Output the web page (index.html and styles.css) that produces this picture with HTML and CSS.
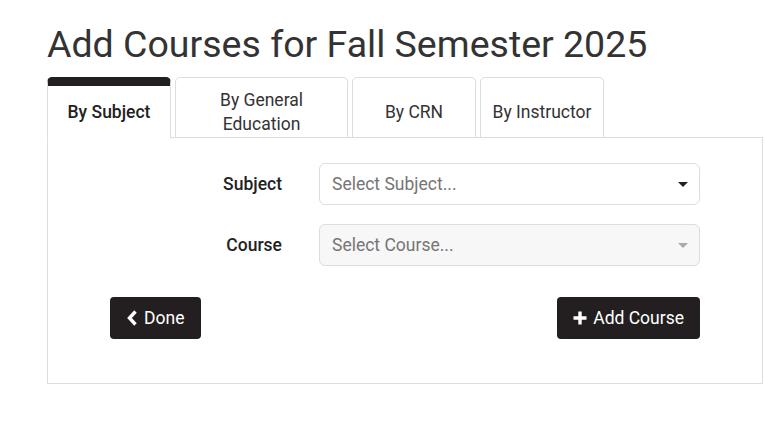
FILE: index.html
```html
<!DOCTYPE html>
<html>
<head>
<meta charset="utf-8">
<link rel="stylesheet" href="styles.css">
</head>
<body>
<div class="page">
  <h1 class="title">Add Courses for Fall Semester 2025</h1>
  <div class="tabs">
    <div class="tab active w124"><span>By Subject</span></div>
    <div class="tab w173"><span>By General<br>Education</span></div>
    <div class="tab w124"><span>By CRN</span></div>
    <div class="tab w124"><span>By Instructor</span></div>
  </div>
  <div class="panel">
    <div class="form">
      <label class="label">Subject</label>
      <div class="select">
        <span class="placeholder">Select Subject...</span>
        <span class="caret"></span>
      </div>
      <label class="label">Course</label>
      <div class="select disabled">
        <span class="placeholder">Select Course...</span>
        <span class="caret"></span>
      </div>
    </div>
    <div class="actions">
      <button class="btn btn-done">
        <svg class="ico" width="11" height="16" viewBox="0 0 11 16"><path d="M8.5 1.5 L2.5 8 L8.5 14.5" fill="none" stroke="#fff" stroke-width="3.4" stroke-linejoin="miter"/></svg>
        <span>Done</span>
      </button>
      <button class="btn">
        <svg class="ico" width="14" height="14" viewBox="0 0 14 14"><path d="M5.3 0.5h3.4v4.8h4.8v3.4H8.7v4.8H5.3V8.7H0.5V5.3h4.8z" fill="#fff"/></svg>
        <span>Add Course</span>
      </button>
    </div>
  </div>
</div>
</body>
</html>
```
FILE: styles.css
```css
html, body {
  margin: 0;
  padding: 0;
  background: #fff;
}
body {
  font-family: Roboto, "Liberation Sans", Arial, sans-serif;
  color: #333;
}
.page {
  padding-left: 47px;
  width: 716px;
}
.title {
  margin: 0;
  padding: 20px 0 9px 0;
  font-size: 37.5px;
  font-weight: 400;
  line-height: 48px;
  color: #333;
}
.tabs {
  display: flex;
  gap: 4px;
  height: 61px;
  position: relative;
  z-index: 1;
}
.tab {
  box-sizing: border-box;
  height: 61px;
  border: 1px solid #ddd;
  border-radius: 5px 5px 0 0;
  display: flex;
  align-items: center;
  justify-content: center;
  text-align: center;
  font-size: 17.5px;
  line-height: 24px;
  color: #333;
  background: #fff;
  padding-top: 9px;
}
.tab.active {
  border-top: 9px solid #231f20;
  border-bottom: 1px solid #fff;
  font-weight: 500;
  color: #222;
  padding-top: 0;
  height: 62px;
}
.w124 { width: 124px; }
.w173 { width: 173px; }
.panel {
  box-sizing: border-box;
  border: 1px solid #ddd;
  margin-top: -1px;
  width: 716px;
  height: 247px;
  padding: 25px 0 0 62px;
}
.form {
  display: grid;
  grid-template-columns: 172px 381px;
  column-gap: 37px;
  row-gap: 19px;
  align-items: center;
}
.label {
  text-align: right;
  font-size: 17.5px;
  font-weight: 500;
  color: #222;
}
.select {
  box-sizing: border-box;
  height: 42px;
  border: 1px solid #ddd;
  border-radius: 6px;
  background: #fff;
  display: flex;
  align-items: center;
  justify-content: space-between;
  padding: 0 11px 0 12px;
}
.select.disabled {
  background: #f7f7f7;
}
.placeholder {
  font-size: 17.5px;
  color: #757575;
}
.caret {
  width: 0;
  height: 0;
  border-left: 5px solid transparent;
  border-right: 5px solid transparent;
  border-top: 5px solid #222;
}
.select.disabled .caret {
  border-top-color: #aaa;
}
.actions {
  display: flex;
  justify-content: space-between;
  width: 590px;
  margin-top: 31px;
}
.btn {
  box-sizing: border-box;
  height: 42px;
  background: #231f20;
  color: #fff;
  border: 0;
  border-radius: 4px;
  font-family: Roboto, "Liberation Sans", Arial, sans-serif;
  font-size: 17.5px;
  padding: 0 16px 0 16px;
  display: flex;
  align-items: center;
  gap: 6px;
}
.btn-done {
  padding: 0 17px 0 17px;
}
.ico {
  display: block;
}
```
